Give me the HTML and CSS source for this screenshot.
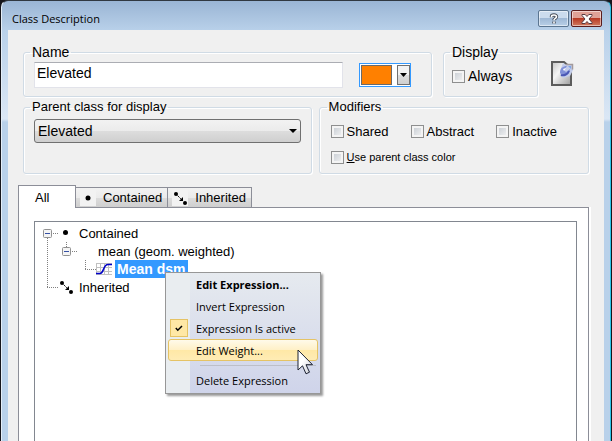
FILE: index.html
```html
<!DOCTYPE html>
<html lang="en">

<head>
    <meta charset="UTF-8">
    <meta name="viewport" content="width=device-width, initial-scale=1.0">
    <title>Class Description</title>
    <link rel="stylesheet" href="styles.css">
</head>

<body>

    <div class="window">
        <header class="title-bar">
            <h1>Class Description</h1>
            <button class="caption-button" type="button" aria-label="Help">
                <svg width="12" height="12" viewBox="0 0 12 12">
                    <path d="M3.500 4.200V3.500C3.500 2.300 4.400 2 6 2S8.500 2.500 8.500 3.800C8.500 5.400 6 5.400 6 7.200M6 8.600v2" fill="none" stroke="#444b57" stroke-width="3.400" />
                    <path d="M3.500 4.200V3.500C3.500 2.300 4.400 2 6 2S8.500 2.500 8.500 3.800C8.500 5.400 6 5.400 6 7.200M6 8.600v2" fill="none" stroke="#fff" stroke-width="1.600" />
                </svg>
            </button>
            <button class="caption-button close" type="button" aria-label="Close">
                <svg width="12" height="10" viewBox="0 0 12 10">
                    <path d="M1 .5h3.200L6 2.500 7.800.5H11v1L8 5l3 3.500v1H7.800L6 7.500l-1.800 2H1v-1L4 5 1 1.500z" fill="#fff" stroke="#573b42" />
                </svg>
            </button>
        </header>

        <main class="content">
            <div class="row">
                <fieldset class="group name-group">
                    <legend>Name</legend>
                    <input class="name-input" type="text" value="Elevated" aria-label="Name">
                    <button class="color-picker" type="button" aria-label="Color">
                        <span class="swatch"></span>
                        <span class="drop">
                            <svg width="7" height="4" viewBox="0 0 7 4"><path d="M0 0h7L3.500 4z" /></svg>
                        </span>
                    </button>
                </fieldset>
                <fieldset class="group display-group">
                    <legend>Display</legend>
                    <label class="check"><input type="checkbox">Always</label>
                </fieldset>
                <button class="note-button" type="button" aria-label="Notes">
                    <svg width="24" height="26" viewBox="0 0 24 26">
                        <defs>
                            <linearGradient id="sheet" x1="0" y1="0" x2="1" y2="1">
                                <stop offset="0" stop-color="#c4c4c4" />
                                <stop offset=".4" stop-color="#f4f4f4" />
                                <stop offset="1" stop-color="#9c9c9c" />
                            </linearGradient>
                        </defs>
                        <path d="M1 1h12l7 6v17H1z" fill="url(#sheet)" stroke="#5c5c5c" stroke-width="2" />
                        <path d="M12 2l3 2h7v5l-3 6-7 2-3-3 1-7z" fill="#c3cdea" />
                        <path d="M9 12c0-5 3-7 7-7l-3 4 2 2 4-3c0 4-3 7-7 7z" fill="#8191d8" />
                        <path d="M10 14c3 1 7-1 8-4" fill="none" stroke="#4a58b5" stroke-width="2" />
                        <path d="M15 3.500h6.500v5" fill="none" stroke="#a39a9c" stroke-width="1.500" />
                        <path d="M17 5h3v3z" fill="#7ea5e8" />
                        <path d="M12 8l3-1-2 3z" fill="#fff" />
                    </svg>
                </button>
            </div>

            <div class="row lower">
                <fieldset class="group parent-group">
                    <legend>Parent class for display</legend>
                    <div class="select-box">
                        <select aria-label="Parent class for display">
                            <option>Elevated</option>
                        </select>
                        <svg width="8" height="4" viewBox="0 0 8 4"><path d="M0 0h8L4 4z" /></svg>
                    </div>
                </fieldset>
                <fieldset class="group modifiers-group">
                    <legend>Modifiers</legend>
                    <div class="checks">
                        <label class="check"><input type="checkbox">Shared</label>
                        <label class="check"><input type="checkbox">Abstract</label>
                        <label class="check"><input type="checkbox">Inactive</label>
                    </div>
                    <label class="check small"><input type="checkbox"><span><u>U</u>se parent class color</span></label>
                </fieldset>
            </div>

            <div class="tabs" role="tablist">
                <button class="tab active" type="button" role="tab" aria-selected="true">All</button>
                <button class="tab" type="button" role="tab">
                    <svg class="tab-icon" width="16" height="16" viewBox="0 0 16 16"><circle cx="8" cy="8" r="2.500" /></svg>
                    Contained
                </button>
                <button class="tab" type="button" role="tab">
                    <svg class="tab-icon" width="16" height="16" viewBox="0 0 16 16">
                        <circle cx="4" cy="4" r="2" />
                        <circle cx="13" cy="13" r="2" />
                        <path d="M4 4l6 6" stroke="#000" stroke-dasharray="2 1" />
                        <path d="M11 7v4H7z" />
                    </svg>
                    Inherited
                </button>
            </div>

            <section class="pane">
                <div class="tree" role="tree">
                    <div class="node" role="treeitem">
                        <svg width="44" height="18" viewBox="0 0 44 18">
                            <path class="guide" d="M12.500 14v4M18 9.500h6" />
                            <rect class="expander" x="8.500" y="5.500" width="8" height="8" rx="1" />
                            <path class="minus" d="M10 9.500h5" />
                            <circle cx="30.500" cy="8.500" r="2.500" />
                        </svg>
                        <span class="label">Contained</span>
                    </div>
                    <div class="node" role="treeitem">
                        <svg width="63" height="18" viewBox="0 0 63 18">
                            <path class="guide" d="M12.500 0v18M31.500 0v5M37 9.500h5" />
                            <rect class="expander" x="27.500" y="5.500" width="8" height="8" rx="1" />
                            <path class="minus" d="M29 9.500h5" />
                        </svg>
                        <span class="label">mean (geom. weighted)</span>
                    </div>
                    <div class="node" role="treeitem" aria-selected="true">
                        <svg width="80" height="18" viewBox="0 0 80 18">
                            <path class="guide" d="M12.500 0v18M50.500 0v10M50 9.500h11" />
                            <path class="grid-lines" d="M61.500 3v12M65.500 3v12M69.500 3v12M73.500 3v12M61 3.500h16M61 7.500h16M61 11.500h16M61 14.500h16" />
                            <path class="curve" d="M61 13.500h4c4 0 3-9 8-9h4" />
                        </svg>
                        <span class="label selected">Mean dsm</span>
                    </div>
                    <div class="node" role="treeitem">
                        <svg width="44" height="18" viewBox="0 0 44 18">
                            <path class="guide" d="M12.500 0v10M12 9.500h12" />
                            <circle cx="27" cy="5" r="2" />
                            <circle cx="36" cy="14" r="2" />
                            <path d="M27 5l6 6" stroke="#000" stroke-dasharray="2 1" />
                            <path d="M34 8v4h-4z" />
                        </svg>
                        <span class="label">Inherited</span>
                    </div>
                </div>
            </section>
        </main>
    </div>

    <div class="context-menu" role="menu">
        <button class="item default" type="button" role="menuitem"><span class="mark"></span>Edit Expression...</button>
        <button class="item" type="button" role="menuitem"><span class="mark"></span>Invert Expression</button>
        <button class="item" type="button" role="menuitemcheckbox" aria-checked="true">
            <span class="mark checked">
                <svg width="8" height="7" viewBox="0 0 8 7"><path d="M.8 3l2 2.200L7 1" fill="none" stroke="#000" stroke-width="1.500" /></svg>
            </span>Expression Is active
        </button>
        <button class="item hover" type="button" role="menuitem"><span class="mark"></span>Edit Weight...</button>
        <hr class="separator">
        <button class="item" type="button" role="menuitem"><span class="mark"></span>Delete Expression</button>
    </div>

    <svg class="pointer" width="18" height="27" viewBox="0 0 18 27">
        <defs>
            <linearGradient id="arrow" x1="0" y1="0" x2="1" y2="1">
                <stop offset=".4" stop-color="#fff" />
                <stop offset="1" stop-color="#c9ccd4" />
            </linearGradient>
        </defs>
        <path d="M1 1v20l4.500-4.200 3.500 8 3.500-1.600-3.500-7.500h6.500z" fill="url(#arrow)" stroke="#1d2233" />
    </svg>

</body>

</html>
```
FILE: styles.css
```css
* {
    box-sizing: border-box;
}

body {
    margin: 0;
    background: #16161c;
    font-family: "Liberation Sans", Arial, sans-serif;
    font-size: 14px;
    color: #000;
    overflow: hidden;
}

button,
input,
select {
    font: inherit;
    color: inherit;
}

svg {
    flex: none;
}

/* window frame */
.window {
    display: flex;
    flex-direction: column;
    height: 100vh;
    margin: 0 1px;
    padding: 0 6px;
    background: linear-gradient(#9ab5d4 0, #b9d1ea 30px, #dbe7f5 118px, #b9d1ea 121px);
    border-top: 1px solid #303840;
    border-left: 1px solid #e4eef8;
    border-right: 1px solid #2fc5e8;
    border-radius: 7px 7px 0 0;
}

.title-bar {
    display: flex;
    align-items: center;
    gap: 2px;
    height: 29px;
    padding: 6px 2px 0 4px;
}

.title-bar h1 {
    flex: 1;
    margin: 0;
    font-family: "Open Sans", sans-serif;
    font-size: 11px;
    font-weight: normal;
}

.caption-button {
    display: flex;
    align-items: center;
    justify-content: center;
    width: 31px;
    height: 17px;
    padding: 0;
    border: 1px solid #5b7590;
    border-radius: 2px;
    background: linear-gradient(#cbdcee 45%, #9fb9d6 50%, #b8cfe7);
    box-shadow: inset 0 0 0 1px rgba(255, 255, 255, 0.5);
}

.caption-button.close {
    border-color: #5a1c1c;
    background: linear-gradient(#e0a196 45%, #b83a24 50%, #d07a60);
}

.content {
    flex: 1;
    display: flex;
    flex-direction: column;
    min-height: 0;
    padding: 14px 15px 0;
    background: #f0f0f0;
}

.row {
    display: flex;
    margin-bottom: 2px;
}

/* group boxes */
.group {
    min-width: 0;
    margin: 0;
    padding: 2px 10px 8px;
    border: 1px solid #d0dbe5;
    border-radius: 3px;
    box-shadow: inset 1px 1px #fff, 1px 1px #fff;
}

.group legend {
    margin-left: -4px;
    padding: 0 2px;
    line-height: 16px;
}

.lower legend {
    font-size: 13px;
}

.name-group {
    flex: 1;
    display: flex;
    justify-content: space-between;
    gap: 16px;
    padding-right: 20px;
}

.name-input {
    flex: 1;
    min-width: 0;
    height: 26px;
    padding: 0 2px 4px;
    border: 1px solid #e2e3ea;
    border-top-color: #abadb3;
    background: #fff;
}

.color-picker {
    display: flex;
    justify-content: space-between;
    width: 52px;
    height: 24px;
    margin-top: 1px;
    padding: 1px 0 1px 1px;
    border: 1px solid #3399ff;
    background: #fff;
}

.swatch {
    width: 31px;
    height: 20px;
    border: 1px solid #6a6a6a;
    background: #ff8000;
}

.drop {
    display: flex;
    align-items: center;
    justify-content: center;
    width: 13px;
    border: 1px solid #707070;
    background: linear-gradient(#f2f2f2 50%, #dddddd 50%, #cfcfcf);
}

.display-group {
    width: 95px;
    margin-left: 11px;
    padding: 8px;
}

.display-group legend {
    margin-left: -2px;
}

.note-button {
    width: 24px;
    height: 26px;
    margin: 17px 14px 0 13px;
    padding: 0;
    border: 0;
    background: none;
}

.check {
    display: flex;
    align-items: center;
    gap: 3px;
    height: 16px;
}

.check input {
    appearance: none;
    width: 13px;
    height: 13px;
    margin: 0;
    border: 1px solid #8e8f8f;
    background: linear-gradient(135deg, #c3c9d0, #f6f6f6);
    box-shadow: inset 0 0 0 2px #f4f4f4;
}

.parent-group {
    flex: 290;
    padding-top: 4px;
}

.select-box {
    display: grid;
    align-items: center;
}

.select-box select,
.select-box svg {
    grid-area: 1 / 1;
}

.select-box select {
    appearance: none;
    width: 100%;
    height: 24px;
    padding: 0 3px;
    border: 1px solid #707070;
    border-radius: 3px;
    background: linear-gradient(#f2f2f2, #ebebeb 50%, #dddddd 50%, #cfcfcf);
}

.select-box svg {
    justify-self: end;
    margin-right: 4px;
    pointer-events: none;
}

.modifiers-group {
    flex: 268;
    margin-left: 7px;
    padding: 8px 11px;
}

.checks {
    display: flex;
    gap: 22px;
    margin-bottom: 10px;
    font-size: 13px;
}

.check.small {
    font-size: 11px;
}

/* tabs */
.tabs {
    display: flex;
    align-items: flex-end;
    margin: 9px 0 0 -5px;
    font-size: 13px;
}

.tab {
    display: flex;
    align-items: center;
    gap: 7px;
    height: 20px;
    padding: 0 5px 0 4px;
    border: 1px solid #8c8e98;
    border-width: 1px 1px 0 0;
    background: linear-gradient(#f2f2f2, #ebebeb 50%, #dddddd 50%, #cfcfcf);
}

.tab-icon {
    background: #f2f2f2;
}

.tab.active {
    z-index: 1;
    width: 58px;
    height: 23px;
    margin-bottom: -1px;
    padding: 0 16px;
    border-left-width: 1px;
    background: #fff;
}

.pane {
    flex: 1;
    min-height: 0;
    margin: 0 0 0 -5px;
    padding: 13px 11px 0 15px;
    border: 1px solid #8c8e98;
    border-bottom: 0;
    background: #fff;
    box-shadow: 2px 0 #fff;
}

.tree {
    height: 100%;
    padding-top: 2px;
    border: 1px solid #828790;
    border-bottom: 0;
    font-size: 13px;
}

.node {
    display: flex;
    align-items: center;
    height: 18px;
}

.label.selected {
    padding: 0 3px 0 2px;
    background: #3399ff;
    color: #fff;
    font-size: 14px;
    font-weight: bold;
    line-height: 18px;
}

.guide {
    fill: none;
    stroke: #808080;
    stroke-dasharray: 1 1;
}

.expander {
    fill: #f4f4f4;
    stroke: #919191;
}

.minus {
    stroke: #3550a5;
}

.grid-lines {
    stroke: #c0c0c0;
}

.curve {
    fill: none;
    stroke: #0000c8;
    stroke-width: 1.5;
}

/* popup over the tree */
.context-menu {
    position: absolute;
    left: 165px;
    top: 272px;
    width: 156px;
    padding: 0 2px 2px;
    border: 1px solid #979797;
    background: linear-gradient(90deg, #e9edf0 24px, transparent 24px), linear-gradient(#e6eaef, #cfd4ea);
    box-shadow: 2px 2px 2px rgba(0, 0, 0, 0.4);
    font-family: "Open Sans", sans-serif;
    font-size: 11px;
}

.item {
    display: flex;
    align-items: center;
    gap: 8px;
    width: 100%;
    height: 22px;
    padding: 0 1px;
    border: 1px solid transparent;
    border-radius: 3px;
    background: none;
    white-space: nowrap;
}

.item.default {
    font-weight: bold;
}

.item.hover {
    border-color: #e5c365;
    background: linear-gradient(#fffaea, #fff0c6 50%, #ffe8a6 50%, #ffecb5);
}

.mark {
    display: flex;
    align-items: center;
    justify-content: center;
    width: 18px;
    height: 18px;
}

.mark.checked {
    border: 1px solid #e5c365;
    background: #ffe8a6;
}

.separator {
    height: 1px;
    margin: 4px 2px 3px 32px;
    border: 0;
    background: #bcbfc9;
}

.pointer {
    position: absolute;
    left: 297px;
    top: 349px;
}
```
